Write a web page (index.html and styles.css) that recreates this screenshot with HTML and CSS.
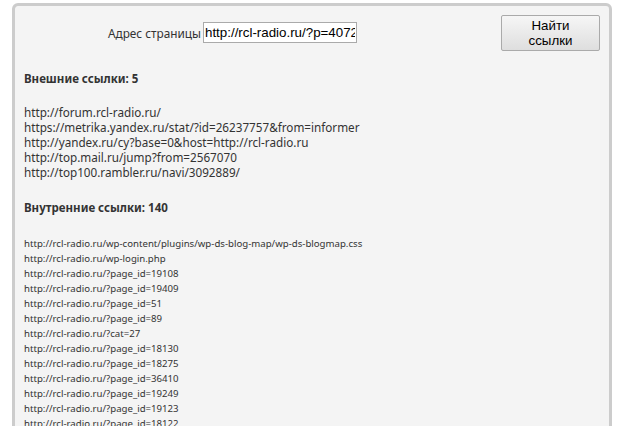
FILE: index.html
```html
<!DOCTYPE html>
<html lang="ru">
<head>
<meta charset="utf-8">
<title>Поиск ссылок</title>
<link rel="stylesheet" href="styles.css">
</head>
<body>
<main class="panel">
  <form class="search">
    <label class="search-label" for="url">Адрес страницы</label>
    <input class="search-input" id="url" type="text" value="http://rcl-radio.ru/?p=40725">
    <button class="search-button" type="button">Найти ссылки</button>
  </form>
  <h2 class="heading heading-external">Внешние ссылки: 5</h2>
  <div class="external">
    <div>http://forum.rcl-radio.ru/</div>
    <div>https://metrika.yandex.ru/stat/?id=26237757&amp;from=informer</div>
    <div>http://yandex.ru/cy?base=0&amp;host=http://rcl-radio.ru</div>
    <div>http://top.mail.ru/jump?from=2567070</div>
    <div>http://top100.rambler.ru/navi/3092889/</div>
  </div>
  <h2 class="heading heading-internal">Внутренние ссылки: 140</h2>
  <div class="internal">
    <div>http://rcl-radio.ru/wp-content/plugins/wp-ds-blog-map/wp-ds-blogmap.css</div>
    <div>http://rcl-radio.ru/wp-login.php</div>
    <div>http://rcl-radio.ru/?page_id=19108</div>
    <div>http://rcl-radio.ru/?page_id=19409</div>
    <div>http://rcl-radio.ru/?page_id=51</div>
    <div>http://rcl-radio.ru/?page_id=89</div>
    <div>http://rcl-radio.ru/?cat=27</div>
    <div>http://rcl-radio.ru/?page_id=18130</div>
    <div>http://rcl-radio.ru/?page_id=18275</div>
    <div>http://rcl-radio.ru/?page_id=36410</div>
    <div>http://rcl-radio.ru/?page_id=19249</div>
    <div>http://rcl-radio.ru/?page_id=19123</div>
    <div>http://rcl-radio.ru/?page_id=18122</div>
  </div>
</main>
</body>
</html>
```
FILE: styles.css
```css
html, body {
  margin: 0;
  height: 100%;
  overflow: hidden;
  background: #fff;
}
body {
  padding: 3px 21px 0 12px;
  box-sizing: border-box;
  font-family: "Noto Sans", sans-serif;
  color: #333;
}
.panel {
  height: 500px;
  box-sizing: border-box;
  background: #f4f4f4;
  border: 3px solid #ccc;
  border-radius: 6px;
  padding: 9px 9px 0 9px;
}
.search {
  display: flex;
  align-items: center;
  height: 36px;
}
.search-label {
  width: 93px;
  margin-left: 84px;
  margin-right: 2px;
  font-size: 11.8px;
  white-space: nowrap;
}
.search-input {
  box-sizing: border-box;
  width: 154px;
  height: 21px;
  margin-top: -1px;
  padding: 1px 1px;
  border: 1px solid #aaa;
  background: #fff;
  color: #000;
  font: 13.33px "Liberation Sans", sans-serif;
  outline: 0;
}
.search-button {
  box-sizing: border-box;
  width: 99px;
  height: 36px;
  margin-left: 144px;
  padding: 0 14px;
  border: 1px solid #aaa;
  border-radius: 2px;
  background: linear-gradient(#f6f6f6, #dedede);
  color: #000;
  font: 13.33px/15px "Liberation Sans", sans-serif;
}
.heading {
  margin: 0;
  font-size: 11.5px;
  line-height: 16px;
  font-weight: 700;
}
.heading-external { margin-top: 20px; }
.external {
  margin-top: 18px;
  font-size: 11.7px;
  line-height: 15px;
}
.heading-internal { margin-top: 20px; }
.internal {
  margin-top: 20px;
  font-size: 9.63px;
  line-height: 15px;
}
```
